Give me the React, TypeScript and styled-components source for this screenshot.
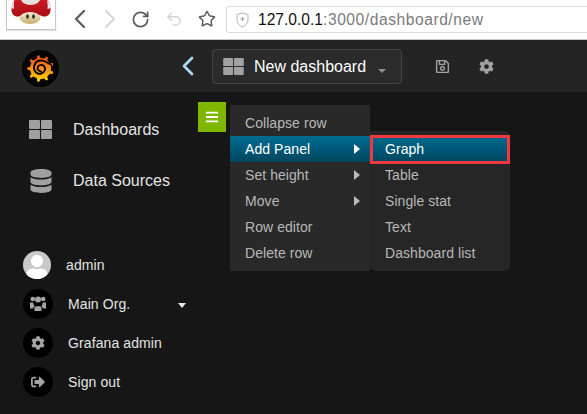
import React from "react";
import styled, { createGlobalStyle } from "styled-components";
import { ChevronLeft, ChevronRight, RotateCw, Undo2, Star } from "lucide-react";
import { FaDatabase, FaCog, FaSignOutAlt, FaRegSave, FaBars, FaUser } from "react-icons/fa";

const Global = createGlobalStyle`
  html, body { margin: 0; padding: 0; background: #161616; }
  body { width: 587px; height: 414px; overflow: hidden; font-family: "Liberation Sans", Arial, sans-serif; }
  * { box-sizing: border-box; }
`;

const Page = styled.div`
  width: 587px;
  height: 414px;
  display: flex;
  flex-direction: column;
  overflow: hidden;
`;

const BrowserBar = styled.header`
  height: 40px;
  flex: none;
  background: #fff;
  border-bottom: 1px solid #c9c9c9;
  display: flex;
  align-items: flex-start;
  padding-left: 6px;
`;

const FaviconFrame = styled.div`
  flex: none;
  width: 50px;
  height: 30px;
  background: #fff;
  border: 1px solid #c8c8c8;
  border-top: none;
  box-shadow: 0 1px 1px #ddd;
  display: flex;
  justify-content: center;
  overflow: hidden;
`;

const ToolButton = styled.span<{ $x: number; $color: string }>`
  flex: none;
  margin-left: ${(p) => p.$x}px;
  margin-top: 3px;
  height: 32px;
  display: flex;
  align-items: center;
  color: ${(p) => p.$color};
`;

const AddressBox = styled.div`
  flex: none;
  margin-left: 10px;
  margin-top: 6px;
  width: 361px;
  height: 27px;
  border: 1px solid #dcdcdc;
  border-right: none;
  border-radius: 3px 0 0 3px;
  display: flex;
  align-items: center;
  padding-left: 9px;
  gap: 9px;
  font-size: 15.6px;
  white-space: nowrap;
`;

const Host = styled.span`
  color: #111;
`;

const UrlRest = styled.span`
  color: #7b7b7b;
  letter-spacing: 0.55px;
`;

const NavBar = styled.nav`
  height: 52px;
  flex: none;
  background: #242424;
  display: flex;
  align-items: center;
  padding-left: 21px;
`;

const LogoSlot = styled.span`
  display: flex;
  margin-top: 4px;
`;

const BackChevron = styled.span`
  margin-left: 112px;
  display: flex;
  align-items: center;
  color: #a8dcf2;
`;

const DashButton = styled.div`
  margin-left: 8px;
  width: 190px;
  height: 35px;
  margin-top: 1px;
  background: #2b2b2b;
  border: 1px solid #444;
  border-radius: 4px;
  display: flex;
  align-items: center;
  padding-left: 10px;
  color: #fff;
  font-size: 16px;
`;

const DashIcon = styled.span`
  color: #a2a2a2;
  display: flex;
  margin-right: 10px;
`;

const Caret = styled.span`
  width: 0;
  height: 0;
  border-left: 4px solid transparent;
  border-right: 4px solid transparent;
  border-top: 4px solid #8f8f8f;
  margin-left: 12px;
  margin-top: 9px;
`;

const NavIcon = styled.span<{ $x: number }>`
  margin-left: ${(p) => p.$x}px;
  color: #a2a2a2;
  display: flex;
  font-size: 15px;
`;

const Body = styled.main`
  flex: 1;
  position: relative;
  background: #161616;
  display: flex;
`;

const Sidebar = styled.aside`
  width: 198px;
  flex: none;
  display: flex;
  flex-direction: column;
  padding-top: 12px;
`;

const SideLink = styled.div`
  height: 51px;
  display: flex;
  align-items: center;
  padding-left: 29px;
  color: #e4e4e4;
  font-size: 16px;
`;

const SideIcon = styled.span`
  width: 44px;
  color: #a0a0a0;
  font-size: 24px;
  display: flex;
`;

const UserList = styled.div`
  margin-top: 40px;
  display: flex;
  flex-direction: column;
`;

const UserRow = styled.div<{ $h: number }>`
  height: ${(p) => p.$h}px;
  display: flex;
  align-items: center;
  padding-left: 23px;
  color: #e4e4e4;
  font-size: 14px;
  letter-spacing: 0.1px;
  position: relative;
`;

const Avatar = styled.span`
  width: 28px;
  height: 28px;
  border-radius: 50%;
  background: #c9c9c9;
  color: #fff;
  overflow: hidden;
  display: flex;
  justify-content: center;
  align-items: flex-end;
  font-size: 24px;
  margin-right: 15px;
`;

const RoundIcon = styled.span<{ $size: number }>`
  width: 30px;
  height: 30px;
  border-radius: 50%;
  background: #000;
  color: #a4a4a4;
  display: flex;
  justify-content: center;
  align-items: center;
  font-size: ${(p) => p.$size}px;
  margin-right: 15px;
`;

const OrgCaret = styled.span`
  position: absolute;
  left: 178px;
  top: 19px;
  width: 0;
  height: 0;
  border-left: 4px solid transparent;
  border-right: 4px solid transparent;
  border-top: 5px solid #e8e8e8;
`;

const RowHandle = styled.div`
  position: absolute;
  left: 198px;
  top: 10px;
  width: 28px;
  height: 30px;
  background: #7eb600;
  color: #fff;
  display: flex;
  justify-content: center;
  align-items: center;
  font-size: 14px;
`;

const Menu = styled.ul<{ $left: number; $top: number; $round: boolean }>`
  position: absolute;
  left: ${(p) => p.$left}px;
  top: ${(p) => p.$top}px;
  width: 140px;
  margin: 0;
  padding: 5px 0;
  list-style: none;
  background: ${(p) => (p.$round ? "#262626" : "#292929")};
  border-radius: ${(p) => (p.$round ? "0 6px 6px 6px" : "0")};
`;

const Item = styled.li<{ $active?: boolean }>`
  position: relative;
  height: 26px;
  display: flex;
  align-items: center;
  justify-content: space-between;
  padding: 0 10px 0 15px;
  font-size: 14px;
  letter-spacing: 0.06px;
  color: ${(p) => (p.$active ? "#fff" : "#b8b8b8")};
  background: ${(p) => (p.$active ? "linear-gradient(to bottom, #006c90, #00465f)" : "transparent")};
`;

const RedBox = styled.span`
  position: absolute;
  left: 0;
  right: 0;
  top: -1px;
  bottom: -2px;
  border: 3px solid #f2373d;
`;

const Arrow = styled.span<{ $active?: boolean }>`
  width: 0;
  height: 0;
  border-top: 5px solid transparent;
  border-bottom: 5px solid transparent;
  border-left: 6px solid ${(p) => (p.$active ? "#fff" : "#b8b8b8")};
`;

const Grid = ({ w, h }: { w: number; h: number }) => (
  <svg width={w} height={h} viewBox="0 0 23 19" aria-hidden="true" style={{ display: "block" }} fill="currentColor">
    <rect x="0" y="0" width="11" height="9" rx="1" />
    <rect x="12" y="0" width="11" height="9" rx="1" />
    <rect x="0" y="10" width="11" height="9" rx="1" />
    <rect x="12" y="10" width="11" height="9" rx="1" />
  </svg>
);

const Users = () => (
  <svg width="16" height="15" viewBox="0 0 16 15" aria-hidden="true" fill="currentColor" style={{ display: "block" }}>
    <circle cx="2.800" cy="3" r="2.300" />
    <circle cx="13.200" cy="3" r="2.300" />
    <circle cx="8" cy="3.500" r="3" />
    <path d="M0 6.500h3.300c0 2 .6 2.900 1.600 3.700-1 .4-1.700 1.200-1.900 2.300H0z" />
    <path d="M16 6.500h-3.300c0 2-.6 2.900-1.600 3.700 1 .4 1.700 1.200 1.900 2.300H16z" />
    <path d="M4.500 11c.8-.6 1.500-.8 2-.8h3c.5 0 1.200.2 2 .8v4h-7z" />
  </svg>
);

const Mushroom = () => (
  <svg width="40" height="29" viewBox="0 0 40 29" aria-hidden="true">
    <defs>
      <linearGradient id="cap" x1="0" y1="0" x2="0" y2="1">
        <stop offset="0" stopColor="#d8202a" />
        <stop offset="1" stopColor="#a80c14" />
      </linearGradient>
      <linearGradient id="stem" x1="0" y1="0" x2="0" y2="1">
        <stop offset="0" stopColor="#f3ead0" />
        <stop offset="1" stopColor="#c9ae6c" />
      </linearGradient>
    </defs>
    <path d="M0.500 9C1-1 8-6 20-6s19 5 19.500 15c.2 5-3 8-7 7.500-3-.5-6-3-12.500-3.500-6.500.5-9.500 3-12.500 3.500-4 .5-7.200-2.500-7-7.500z" fill="url(#cap)" />
    <ellipse cx="19.500" cy="-1" rx="9.500" ry="6" fill="#e6dfdf" />
    <path d="M36 0c2 2 3 5 3.500 8l-3 1c.5-3 0-6-.5-9z" fill="#eee" />
    <path d="M3 1C1.500 3 1 5 .5 8l2.500 1c-.5-3 0-6 0-8z" fill="#eee" />
    <ellipse cx="19" cy="18" rx="10.500" ry="6" fill="url(#stem)" />
    <ellipse cx="16.500" cy="16.500" rx="1.300" ry="2.300" fill="#222" />
    <ellipse cx="22.500" cy="16.500" rx="1.300" ry="2.300" fill="#222" />
  </svg>
);

const gearPath = (() => {
  const pts: string[] = [];
  const teeth = 9;
  for (let i = 0; i < teeth; i++) {
    const a = (i / teeth) * Math.PI * 2 - 0.35;
    const step = (Math.PI * 2) / teeth;
    ([[-0.5, 11], [-0.22, 11.2], [-0.12, 14], [0.12, 14], [0.22, 11.2]] as const).forEach(([o, r]) => {
      const t = a + o * step;
      pts.push(`${(19.5 + r * Math.cos(t)).toFixed(2)} ${(20.5 + r * Math.sin(t)).toFixed(2)}`);
    });
  }
  return `M${pts.join("L")}Z`;
})();

const Logo = () => (
  <svg width="39" height="39" viewBox="0 0 39 41" aria-hidden="true" style={{ display: "block" }}>
    <defs>
      <linearGradient id="gf" x1="0" y1="0" x2="0" y2="1">
        <stop offset="0" stopColor="#f0461e" />
        <stop offset="0.5" stopColor="#fb8c10" />
        <stop offset="1" stopColor="#ffd90a" />
      </linearGradient>
    </defs>
    <circle cx="19.500" cy="20.500" r="19.500" fill="#050505" />
    <path fill="url(#gf)" d={gearPath} />
    <path
      fill="none"
      stroke="#050505"
      strokeWidth="2"
      strokeLinecap="round"
      d="M20 23.500c-2.500 0-4-1.800-3.500-4s3-3.400 5.200-2.500 3.300 3.500 2.200 5.800-4.500 4-7.500 2.700-4.500-5-3.300-8.300 4.500-5.400 8-5 6.500 2.500 9.500 4.300"
    />
  </svg>
);

export default function App() {
  return (
    <Page>
      <Global />
      <BrowserBar>
        <FaviconFrame>
          <Mushroom />
        </FaviconFrame>
        <ToolButton $x={8} $color="#5c5c5c"><ChevronLeft size={32} strokeWidth={1.7} /></ToolButton>
        <ToolButton $x={-2} $color="#d8d8d8"><ChevronRight size={32} strokeWidth={1.7} /></ToolButton>
        <ToolButton $x={5} $color="#5c5c5c"><RotateCw size={19} strokeWidth={2.2} /></ToolButton>
        <ToolButton $x={15} $color="#d4d4d4"><Undo2 size={18} strokeWidth={2} /></ToolButton>
        <ToolButton $x={15} $color="#5c5c5c"><Star size={18} strokeWidth={2} /></ToolButton>
        <AddressBox>
          <svg width="13" height="16" viewBox="0 0 13 16" aria-hidden="true">
            <path d="M1 2.500 6.500 1 12 2.500V8c0 3.500-2.500 5.500-5.500 7C3.500 13.500 1 11.500 1 8z" fill="none" stroke="#b5b5b5" />
            <path d="M4.500 7h4M6.500 5v4" stroke="#999" />
          </svg>
          <span><Host>127.0.0.1</Host><UrlRest>:3000/dashboard/new</UrlRest></span>
        </AddressBox>
      </BrowserBar>
      <NavBar>
        <LogoSlot><Logo /></LogoSlot>
        <BackChevron><ChevronLeft size={32} strokeWidth={2} /></BackChevron>
        <DashButton>
          <DashIcon><Grid w={21} h={17} /></DashIcon>
          New dashboard
          <Caret />
        </DashButton>
        <NavIcon $x={33}><FaRegSave /></NavIcon>
        <NavIcon $x={29}><FaCog /></NavIcon>
      </NavBar>
      <Body>
        <Sidebar>
          <SideLink><SideIcon><Grid w={23} h={19} /></SideIcon>Dashboards</SideLink>
          <SideLink><SideIcon><FaDatabase /></SideIcon>Data Sources</SideLink>
          <UserList>
            <UserRow $h={38}><Avatar><FaUser /></Avatar>admin</UserRow>
            <UserRow $h={39}><RoundIcon $size={17}><Users /></RoundIcon>Main Org.<OrgCaret /></UserRow>
            <UserRow $h={39}><RoundIcon $size={14}><FaCog /></RoundIcon>Grafana admin</UserRow>
            <UserRow $h={39}><RoundIcon $size={14}><FaSignOutAlt /></RoundIcon>Sign out</UserRow>
          </UserList>
        </Sidebar>
        <RowHandle><FaBars /></RowHandle>
        <Menu $left={230} $top={13} $round={false}>
          <Item>Collapse row</Item>
          <Item $active>Add Panel<Arrow $active /></Item>
          <Item>Set height<Arrow /></Item>
          <Item>Move<Arrow /></Item>
          <Item>Row editor</Item>
          <Item>Delete row</Item>
        </Menu>
        <Menu $left={370} $top={39} $round>
          <Item $active>Graph<RedBox /></Item>
          <Item>Table</Item>
          <Item>Single stat</Item>
          <Item>Text</Item>
          <Item>Dashboard list</Item>
        </Menu>
      </Body>
    </Page>
  );
}
